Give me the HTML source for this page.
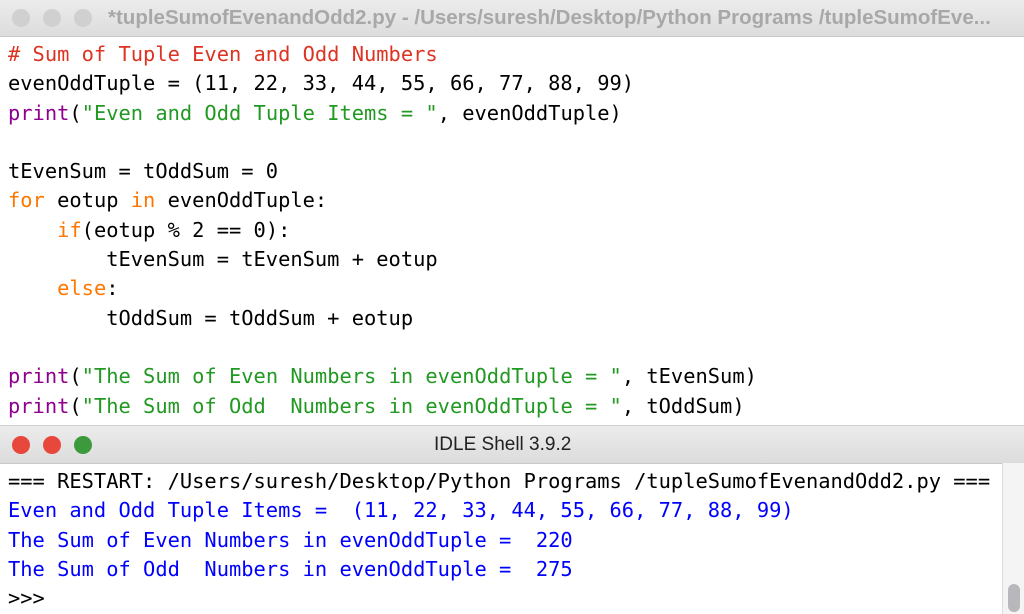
<!DOCTYPE html>
<html><head><meta charset="utf-8"><style>
body{margin:0;width:1024px;height:614px;overflow:hidden;background:#fff;font-family:"DejaVu Sans Mono",monospace;position:relative}
.tb{position:absolute;left:0;width:1024px;background:linear-gradient(#ececec,#dcdcdc);border-bottom:1px solid #c8c8c8}
.dot{position:absolute;width:18px;height:18px;border-radius:50%}
.title{position:absolute;font-family:"Liberation Sans",sans-serif;font-weight:bold;font-size:20.5px;white-space:nowrap}
.code{position:absolute;left:8px;font-size:20.4px;line-height:29.3px;white-space:pre;color:#000}
.c{color:#dd3322}.k{color:#ff7700}.b{color:#900090}.s{color:#229922}.o{color:#0000ff}
</style></head><body>
<div class="tb" style="top:0;height:36px">
<div class="dot" style="left:12px;top:9px;background:#d0d0d0"></div>
<div class="dot" style="left:43px;top:9px;background:#d0d0d0"></div>
<div class="dot" style="left:74px;top:9px;background:#d0d0d0"></div>
<div class="title" style="left:108px;top:6px;color:#a8a8a8">*tupleSumofEvenandOdd2.py - /Users/suresh/Desktop/Python Programs /tupleSumofEve...</div>
</div>
<div class="code" style="top:40px"><span class="c"># Sum of Tuple Even and Odd Numbers</span>
evenOddTuple = (11, 22, 33, 44, 55, 66, 77, 88, 99)
<span class="b">print</span>(<span class="s">"Even and Odd Tuple Items = "</span>, evenOddTuple)

tEvenSum = tOddSum = 0
<span class="k">for</span> eotup <span class="k">in</span> evenOddTuple:
    <span class="k">if</span>(eotup % 2 == 0):
        tEvenSum = tEvenSum + eotup
    <span class="k">else</span>:
        tOddSum = tOddSum + eotup

<span class="b">print</span>(<span class="s">"The Sum of Even Numbers in evenOddTuple = "</span>, tEvenSum)
<span class="b">print</span>(<span class="s">"The Sum of Odd  Numbers in evenOddTuple = "</span>, tOddSum)</div>
<div class="tb" style="top:425px;height:37px;border-top:1px solid #d0d0d0">
<div class="dot" style="left:12px;top:10px;background:#e8473c"></div>
<div class="dot" style="left:43px;top:10px;background:#e8473c"></div>
<div class="dot" style="left:74px;top:10px;background:#3c9a3c"></div>
<div class="title" style="left:434px;top:8px;color:#222;font-weight:normal;font-size:19px">IDLE Shell 3.9.2</div>
</div>
<div class="code" style="top:467px">=== RESTART: /Users/suresh/Desktop/Python Programs /tupleSumofEvenandOdd2.py ===
<span class="o">Even and Odd Tuple Items =  (11, 22, 33, 44, 55, 66, 77, 88, 99)</span>
<span class="o">The Sum of Even Numbers in evenOddTuple =  220</span>
<span class="o">The Sum of Odd  Numbers in evenOddTuple =  275</span>
&gt;&gt;&gt; </div>
<div style="position:absolute;left:1002px;top:463px;width:22px;height:151px;background:#f4f4f4;border-left:1px solid #ddd"></div>
<div style="position:absolute;left:1008px;top:584px;width:12px;height:28px;border-radius:6px;background:#b8b8bc"></div>
</body></html>
